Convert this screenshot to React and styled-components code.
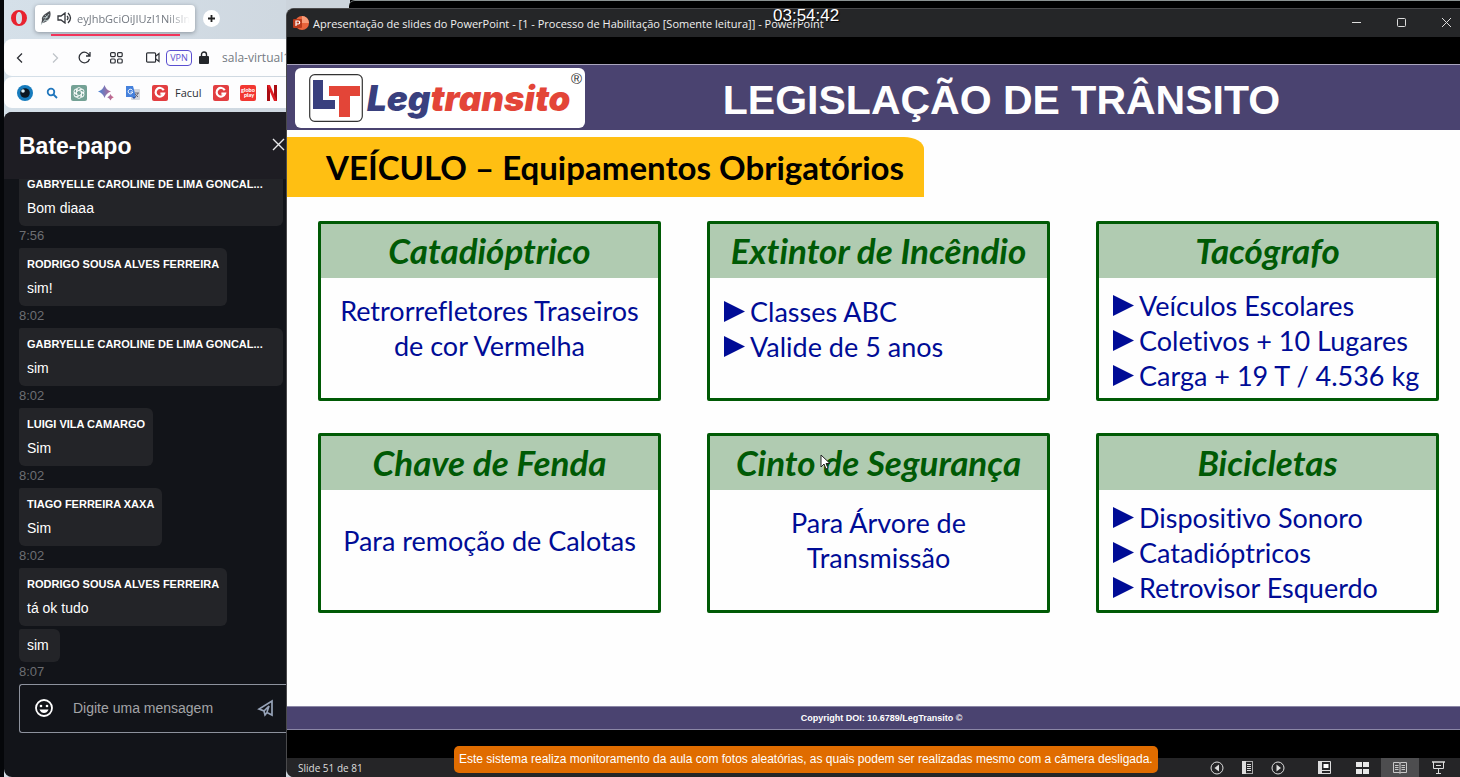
import React from 'react';
import styled, { createGlobalStyle } from 'styled-components';

const Global = createGlobalStyle`
  * { box-sizing: border-box; }
  body { margin: 0; background: #000; }
  button { border: 0; padding: 0; background: none; color: inherit; font: inherit; cursor: pointer; }
  h1, h2, h3, p, ul { margin: 0; padding: 0; }
`;
const Desktop = styled.div`
  position: relative;
  display: flex;
  height: 100vh;
  padding-left: 4px;
  overflow: hidden;
  background: #05070a;
`;
const Browser = styled.section`
  display: flex;
  flex-direction: column;
  flex: 0 0 282px;
  overflow: hidden;
  background: linear-gradient(100deg, #d5e0e9, #ccd4dc);
  font-family: "Open Sans", sans-serif;
`;
const TabStrip = styled.div`
  display: flex;
  align-items: center;
  height: 39px;
  flex: none;
  padding: 0 0 3px 7px;
  gap: 8px;
`;
const Tab = styled.button`
  position: relative;
  display: flex;
  align-items: center;
  gap: 5px;
  width: 160px;
  height: 27px;
  padding: 0 5px;
  border-radius: 4px;
  background: #fff;
  box-shadow: 0 1px 4px #8a939c;
  color: #747a82;
  &::after { content: ""; position: absolute; left: 16px; right: 15px; bottom: -4px; height: 2px; background: #f2345a; }
`;
const TabTitle = styled.span`
  flex: 1;
  overflow: hidden;
  white-space: nowrap;
  text-align: left;
  font-size: 11px;
  mask-image: linear-gradient(90deg, #000 80%, transparent);
`;
const NewTab = styled.button`
  display: grid;
  place-items: center;
  width: 17px;
  height: 17px;
  border-radius: 50%;
  background: #fff;
`;
const AddressBar = styled.div`
  display: flex;
  align-items: center;
  flex: none;
  height: 37px;
  padding-left: 12px;
  gap: 19px;
  border-radius: 8px 0 0 8px;
  background: #fdfdfe;
  color: #2d3036;
  button, svg { display: block; flex: none; }
`;
const History = styled.div`
  display: flex;
  gap: 29px;
`;
const SiteInfo = styled.div`
  display: flex;
  align-items: center;
  gap: 6px;
  margin-left: 4px;
`;
const Vpn = styled.button`
  width: 26px;
  height: 16px;
  border: 1px solid #5a4fd0;
  border-radius: 4px;
  color: #5a4fd0;
  font-size: 9px;
  line-height: 14px;
`;
const Address = styled.span`
  margin-left: 6px;
  color: #747a82;
  font-size: 12px;
  white-space: nowrap;
`;
const Bookmarks = styled.nav`
  display: flex;
  align-items: center;
  flex: none;
  height: 31px;
  margin: 1px 0 4px;
  padding-left: 13px;
  gap: 11px;
  border-radius: 8px 0 0 8px;
  background: #fdfdfe;
  a { display: flex; align-items: center; gap: 7px; color: #2d3036; font-size: 11px; text-decoration: none; }
  svg { display: block; }
`;
const Chat = styled.div`
  display: flex;
  flex: 1;
  flex-direction: column;
  min-height: 0;
  border-radius: 8px 0 0 8px;
  background: #121419;
  color: #fff;
  font-family: "Liberation Sans", sans-serif;
`;
const ChatHead = styled.header`
  display: flex;
  align-items: center;
  justify-content: space-between;
  flex: none;
  height: 67px;
  padding: 0 1px 0 15px;
  border-radius: 8px 0 0 0;
  background: #1e1d23;
  h2 { font-size: 23px; line-height: 28px; }
`;
const Messages = styled.div`
  display: flex;
  flex: 1;
  flex-direction: column;
  align-items: flex-start;
  justify-content: flex-end;
  min-height: 0;
  overflow: hidden;
  padding-left: 15px;
`;
const Bubble = styled.div`
  flex: none;
  width: ${p => (p.$wide ? '264px' : 'auto')};
  margin-bottom: ${p => (p.$joined ? 3 : 0)}px;
  padding: ${p => (p.$short ? '4px 11px 5px 8px' : '4px 8px 6px')};
  border-radius: 2px 6px 6px 6px;
  background: #232428;
  font-size: 14px;
  line-height: 24px;
  strong { display: block; white-space: nowrap; font-size: ${p => (p.$wide ? 11 : 11)}px; }
`;
const Time = styled.time`
  flex: none;
  height: 22px;
  color: #6c6e72;
  font-size: 13px;
  line-height: 20px;
`;
const Composer = styled.form`
  display: flex;
  align-items: center;
  flex: none;
  height: 49px;
  margin: 0 0 44px 15px;
  padding: 0 12px 2px 14px;
  border: 1px solid #8d929d;
  border-right: 0;
  border-radius: 3px 0 0 3px;
  gap: 19px;
  svg { display: block; }
  input { flex: 1; min-width: 0; border: 0; padding: 0; outline: 0; background: none; color: #fff; font: 14px "Liberation Sans", sans-serif; }
  input::placeholder { color: #a3a4a7; opacity: 1; }
`;
const Stage = styled.main`
  display: flex;
  flex: 1;
  flex-direction: column;
  min-width: 0;
  background: linear-gradient(90deg, #ccd4dc 64px, #000 64px);
`;
const BackWindow = styled.div`
  flex: none;
  height: 8px;
  margin-left: 63px;
  border-top: 1px solid #8b9292;
  border-radius: 6px 0 0 0;
  background: #000;
`;
const PowerPoint = styled.section`
  display: flex;
  flex: 1;
  flex-direction: column;
  min-height: 0;
  border: 1px solid #4a4a4c;
  border-width: 1px 0 0 1px;
  border-radius: 8px 0 0 8px;
  overflow: hidden;
  background: #000;
`;
const TitleBar = styled.header`
  display: flex;
  align-items: center;
  flex: none;
  height: 28px;
  padding: 0 8px 0 6px;
  gap: 4px;
  background: #252628;
  color: #f0f0f0;
  font: 11px "Open Sans", sans-serif;
  h1 { flex: 1; font: inherit; white-space: nowrap; }
`;
const WindowButtons = styled.div`
  display: flex;
  gap: 34px;
  svg { display: block; }
`;
const Slide = styled.article`
  display: flex;
  flex: 1;
  flex-direction: column;
  min-height: 0;
  margin: 27px 0 28px;
  background: #fefefe;
`;
const Banner = styled.header`
  display: flex;
  align-items: center;
  flex: none;
  height: 66px;
  padding: 0 8px;
  border-top: 1px solid #aaa5bd;
  background: #4a4370;
  h2 { flex: 1; padding: 4px 34px 0 0; text-align: center; color: #fefefe; font: bold 41px/48px "Liberation Sans", sans-serif; white-space: nowrap; }
`;
const Logo = styled.div`
  position: relative;
  display: flex;
  align-items: center;
  flex: none;
  width: 290px;
  height: 60px;
  padding-left: 14px;
  gap: 4px;
  border-radius: 6px;
  background: #fff;
`;
const Wordmark = styled.span`
  color: #39407e;
  font: italic 900 35px/40px Inter, sans-serif;
  em { color: #e34538; }
`;
const Registered = styled.span`
  position: absolute;
  top: 2px;
  right: 3px;
  color: #333;
  font: 15px/18px "Liberation Sans", sans-serif;
`;
const Ribbon = styled.h3`
  align-self: flex-start;
  flex: none;
  height: 60px;
  margin-top: 7px;
  padding: 0 20px 0 39px;
  border-radius: 0 20px 0 0 / 0 12px 0 0;
  background: #ffbf12;
  color: #000;
  font: bold 33px/60px Lato, sans-serif;
  font-variant-ligatures: none;
  white-space: nowrap;
`;
const Cards = styled.div`
  display: grid;
  grid-template-columns: repeat(3, 1fr);
  gap: 32px 46px;
  padding: 24px 21px 0 31px;
  font-variant-ligatures: none;
`;
const Card = styled.section`
  height: 180px;
  border: 3px solid #005a05;
  border-radius: 2px;
  background: #fefefe;
  color: #000c96;
  h4 { margin: 0; height: 54px; background: #b0cbb1; color: #005a05; text-align: center; font-family: Lato, sans-serif; font-size: 35px; font-style: italic; font-weight: bold; line-height: 52px; }
`;
const CardText = styled.p`
  padding-top: ${p => (p.$single ? 33 : 15)}px;
  text-align: center;
  white-space: pre-line;
  font-family: Lato, sans-serif;
  font-size: 27px;
  line-height: 35px;
`;
const CardList = styled.ul`
  && { padding: ${p => (p.$tall ? 10 : 16)}px 0 0 14px; }
  list-style: none;
  font-family: Lato, sans-serif;
  font-size: 27px;
  line-height: 35px;
  li { display: flex; align-items: center; gap: 5px; white-space: nowrap; }
`;
const Copyright = styled.footer`
  flex: none;
  height: 24px;
  margin-top: auto;
  padding-left: 16px;
  border: solid #8b87a6;
  border-width: 1px 0;
  background: #4a4370;
  color: #fff;
  text-align: center;
  font: bold 9px/22px "Liberation Sans", sans-serif;
`;
const StatusBar = styled.footer`
  display: flex;
  align-items: center;
  justify-content: space-between;
  flex: none;
  height: 19px;
  padding-left: 11px;
  background: #252527;
  color: #dedede;
  font: 10px "Open Sans", sans-serif;
`;
const ViewControls = styled.div`
  display: flex;
  gap: 12px;
  padding-right: 3px;
`;
const ControlGroup = styled.div`
  display: flex;
`;
const StatusButton = styled.button`
  display: grid;
  place-items: center;
  width: ${p => p.$w}px;
  height: 19px;
  background: ${p => (p.$active ? '#4d4d4f' : 'transparent')};
`;
const Clock = styled.time`
  position: absolute;
  top: 6px;
  left: 773px;
  color: #fff;
  font: 17px/20px "Liberation Sans", sans-serif;
  text-shadow: 1px 1px 1px #000;
`;
const Notice = styled.p`
  position: absolute;
  bottom: 4px;
  left: 454px;
  padding: 0 5px;
  border-radius: 5px;
  background: #e06c00;
  color: #fff;
  font: 12px/27px "Liberation Sans", sans-serif;
  white-space: nowrap;
`;
const Pointer = styled.svg`
  position: absolute;
  top: 454px;
  left: 820px;
`;

const G = () => (
  <svg width="16" height="16" viewBox="0 0 16 16"><rect width="16" height="16" rx="2" fill="#e23e41" /><path d="M11.700 5.200A4.300 4.300 0 1 0 12 8.600H8.400" fill="none" stroke="#fff" strokeWidth="2.200" /></svg>
);
const Icon = {
  opera: <svg width="16" height="16" viewBox="0 0 16 16"><path fillRule="evenodd" fill="#e8232f" d="M8 0a8 8 0 1 0 0 16A8 8 0 0 0 8 0Zm0 2c2 0 3 2.500 3 6s-1 6-3 6S5 11.500 5 8s1-6 3-6Z" /></svg>,
  feather: <svg width="12" height="16" viewBox="0 0 12 16"><path d="M1 15 2 10C1 6 6 3 10 1c2 5-1 11-8 12" fill="#4a4d52" /><path d="m1 15 8-11M3 8l5-1M4 11l5-1M5 5l2 2" stroke="#cdd" strokeWidth=".7" /></svg>,
  sound: <svg width="15" height="12" viewBox="0 0 15 12" fill="none" stroke="#34373c" strokeWidth="1.300"><path d="M1 4h3l4-3v10L4 8H1ZM10 4q2 2 0 4M11 1q5 5 0 10" /></svg>,
};
const Arrow = ({ dir }) => <svg width="7" height="12" viewBox="0 0 7 12"><path d={dir === 'l' ? 'M6 1.500 1.500 6 6 10.500' : 'm1 1.500 4.500 4.500L1 10.500'} fill="none" stroke={dir === 'l' ? '#2d3036' : '#bfc4c9'} strokeWidth="1.300" /></svg>;
const Bullet = () => <svg width="21" height="21" viewBox="0 0 21 21"><path d="M0 0 21 10.500 0 21Z" fill="#000c96" /></svg>;

const messages = [
  { from: 'GABRYELLE CAROLINE DE LIMA GONCAL...', wide: true, text: 'Bom diaaa', time: '7:56' },
  { from: 'RODRIGO SOUSA ALVES FERREIRA', text: 'sim!', time: '8:02' },
  { from: 'GABRYELLE CAROLINE DE LIMA GONCAL...', wide: true, text: 'sim', time: '8:02' },
  { from: 'LUIGI VILA CAMARGO', text: 'Sim', time: '8:02' },
  { from: 'TIAGO FERREIRA XAXA', text: 'Sim', time: '8:02' },
  { from: 'RODRIGO SOUSA ALVES FERREIRA', text: 'tá ok tudo' },
  { text: 'sim', time: '8:07' },
];
const cards = [
  { title: 'Catadióptrico', text: 'Retrorrefletores Traseiros\nde cor Vermelha' },
  { title: 'Extintor de Incêndio', list: ['Classes ABC', 'Valide de 5 anos'] },
  { title: 'Tacógrafo', list: ['Veículos Escolares', 'Coletivos + 10 Lugares', 'Carga + 19 T / 4.536 kg'] },
  { title: 'Chave de Fenda', text: 'Para remoção de Calotas', single: true },
  { title: 'Cinto de Segurança', text: 'Para Árvore de\nTransmissão' },
  { title: 'Bicicletas', list: ['Dispositivo Sonoro', 'Catadióptricos', 'Retrovisor Esquerdo'] },
];

const BrowserWindow = () => (
  <Browser>
    <TabStrip>
      {Icon.opera}
      <Tab>{Icon.feather}{Icon.sound}<TabTitle>eyJhbGciOiJIUzI1NiIsIn</TabTitle></Tab>
      <NewTab aria-label="Nova guia"><svg width="9" height="9" viewBox="0 0 9 9"><path d="M4.500 1v7M1 4.500h7" stroke="#222" strokeWidth="1.800" /></svg></NewTab>
    </TabStrip>
    <AddressBar>
      <History>
        <button aria-label="Voltar"><Arrow dir="l" /></button>
        <button aria-label="Avançar"><Arrow dir="r" /></button>
      </History>
      <button aria-label="Recarregar"><svg width="13" height="13" viewBox="0 0 13 13" fill="none" stroke="#2d3036" strokeWidth="1.300"><path d="M11.500 5A5.300 5.300 0 1 0 11.500 8M12 1v4H8" /></svg></button>
      <button aria-label="Painel"><svg width="13" height="12" viewBox="0 0 13 12" fill="none" stroke="#2d3036" strokeWidth="1.200"><rect x=".6" y=".6" width="4.600" height="4" rx="1" /><rect x="7.600" y=".6" width="4.600" height="4" rx="1" /><rect x=".6" y="7" width="4.600" height="4" rx="1" /><rect x="7.600" y="7" width="4.600" height="4" rx="1" /></svg></button>
      <SiteInfo>
        <svg width="14" height="11" viewBox="0 0 14 11" fill="none" stroke="#2d3036" strokeWidth="1.200"><rect x=".6" y=".8" width="9" height="9.400" rx="1" /><path d="m10 4 3-2.500v8L10 7" /></svg>
        <Vpn>VPN</Vpn>
        <svg width="12" height="13" viewBox="0 0 12 13"><rect x="1" y="5" width="10" height="8" rx="1" fill="#24262a" /><path d="M3.500 6V3.500a2.500 2.500 0 0 1 5 0V6" fill="none" stroke="#24262a" strokeWidth="1.400" /></svg>
        <Address>sala-virtual1</Address>
      </SiteInfo>
    </AddressBar>
    <Bookmarks>
      <a href="#olho" aria-label="Olho"><svg width="16" height="16" viewBox="0 0 16 16"><circle cx="8" cy="8" r="8" fill="#167bbd" /><circle cx="8" cy="8" r="4.800" fill="#0c1722" /><circle cx="6" cy="6" r="1.800" fill="#d8edf8" /></svg></a>
      <a href="#busca" aria-label="Busca"><svg width="16" height="16" viewBox="0 0 16 16" fill="none" stroke="#2177bd" strokeWidth="1.800"><circle cx="7" cy="7" r="3.300" /><path d="m9.500 9.500 3.500 3.500" /></svg></a>
      <a href="#gpt" aria-label="ChatGPT"><svg width="16" height="16" viewBox="0 0 16 16"><rect width="16" height="16" rx="2" fill="#74a195" /><g fill="none" stroke="#fff" strokeWidth=".9">{[0, 60, 120, 180, 240, 300].map(a => <path key={a} transform={`rotate(${a} 8 8)`} d="M5.500 8V4.500a2.600 2.600 0 0 1 5 0L8 6" />)}</g></svg></a>
      <a href="#gemini" aria-label="Gemini"><svg width="16" height="16" viewBox="0 0 16 16"><defs><linearGradient id="gem"><stop stopColor="#4383d8" /><stop offset="1" stopColor="#d46583" /></linearGradient></defs><path fill="url(#gem)" d="M6.500 0Q8 5 13 6.500 8 8 6.500 13 5 8 0 6.500 5 5 6.500 0ZM12.500 9q.8 2.500 3.300 3.300-2.500.8-3.300 3.300-.8-2.500-3.300-3.300 2.500-.8 3.300-3.300Z" /></svg></a>
      <a href="#tradutor" aria-label="Tradutor"><svg width="16" height="16" viewBox="0 0 16 16"><rect x="6" y="4" width="9" height="11" rx="1" fill="#d2d6dc" /><path d="M1 1h7l3 11H1Z" fill="#4581dc" /><path d="M7.500 5.500A2.300 2.300 0 1 0 7.700 7H5.500" stroke="#fff" fill="none" /><path d="m9 14 2-2H7Z" fill="#2a56b0" /><path d="M10 8h4m-1 0q-1 3-3 4m0-3 3 3" stroke="#667" fill="none" /></svg></a>
      <a href="#facul"><G />Facul</a>
      <a href="#g" aria-label="G"><G /></a>
      <a href="#globoplay" aria-label="Globoplay"><svg width="16" height="16" viewBox="0 0 16 16"><rect width="16" height="16" rx="2" fill="#f23731" /><g fill="#fff" fontFamily="Lato" fontWeight="900" fontSize="5.500" textAnchor="middle"><text x="8" y="7">globo</text><text x="9" y="12">play</text></g></svg></a>
      <a href="#netflix" aria-label="Netflix"><svg width="10" height="16" viewBox="0 0 10 16"><path d="M0 0h3v16H0ZM7 0h3v16H7Z" fill="#a90c12" /><path d="M0 0h3l7 16H7Z" fill="#e01b22" /></svg></a>
    </Bookmarks>
    <Chat>
      <ChatHead>
        <h2>Bate-papo</h2>
        <button aria-label="Fechar"><svg width="13" height="13" viewBox="0 0 13 13"><path d="m1 1 11 11M12 1 1 12" stroke="#e8e8ea" strokeWidth="1.400" /></svg></button>
      </ChatHead>
      <Messages>
        {messages.map((m, i) => (
          <React.Fragment key={i}>
            <Bubble $wide={m.wide} $joined={!m.time} $short={!m.from}>{m.from && <strong>{m.from}</strong>}{m.text}</Bubble>
            {m.time && <Time>{m.time}</Time>}
          </React.Fragment>
        ))}
      </Messages>
      <Composer onSubmit={e => e.preventDefault()}>
        <button type="button" aria-label="Emoji"><svg width="20" height="20" viewBox="0 0 20 20"><circle cx="10" cy="10" r="8" fill="none" stroke="#fff" strokeWidth="1.800" /><circle cx="7" cy="8" r="1.300" fill="#fff" /><circle cx="13" cy="8" r="1.300" fill="#fff" /><path d="M5.500 11.500h9q-1.500 3.500-4.500 3.500t-4.500-3.500Z" fill="#fff" /></svg></button>
        <input aria-label="Mensagem" placeholder="Digite uma mensagem" />
        <button aria-label="Enviar"><svg width="17" height="18" viewBox="0 0 17 18"><path d="M15 2v14l-5-2.500-2 2.500-1-4-5-2ZM7 12l5-5-2 6" fill="none" stroke="#97a3b8" strokeWidth="1.700" /></svg></button>
      </Composer>
    </Chat>
  </Browser>
);

const SlideView = () => (
  <Slide>
    <Banner>
      <Logo>
        <svg width="54" height="48" viewBox="0 0 54 48"><rect x=".7" y=".7" width="52.600" height="46.600" rx="5" fill="#fff" stroke="#333" strokeWidth="1.200" /><path d="M4 6h10v20h12v9H4Z" fill="#39407e" /><path d="M20 12h31v10H41v21H30V22H20Z" fill="#e34538" /></svg>
        <Wordmark>Leg<em>transito</em></Wordmark>
        <Registered>®</Registered>
      </Logo>
      <h2>LEGISLAÇÃO DE TRÂNSITO</h2>
    </Banner>
    <Ribbon>VEÍCULO – Equipamentos Obrigatórios</Ribbon>
    <Cards>
      {cards.map(c => (
        <Card key={c.title}>
          <h4>{c.title}</h4>
          {c.list
            ? <CardList $tall={c.list.length > 2}>{c.list.map(t => <li key={t}><Bullet />{t}</li>)}</CardList>
            : <CardText $single={c.single}>{c.text}</CardText>}
        </Card>
      ))}
    </Cards>
    <Copyright>Copyright DOI: 10.6789/LegTransito ©</Copyright>
  </Slide>
);

export default function App() {
  return (
    <Desktop>
      <Global />
      <BrowserWindow />
      <Stage>
        <BackWindow />
        <PowerPoint>
          <TitleBar>
            <svg width="16" height="14" viewBox="0 0 16 14"><circle cx="9" cy="7" r="7" fill="#e8643c" /><path d="M9 0a7 7 0 0 1 7 7H9Z" fill="#f79b78" /><rect y="3" width="9" height="9" rx="1" fill="#b93a1b" /><path d="M3 10V5h2.200a1.500 1.500 0 0 1 0 3H3" fill="none" stroke="#fff" strokeWidth="1.200" /></svg>
            <h1>Apresentação de slides do PowerPoint - [1 - Processo de Habilitação [Somente leitura]] - PowerPoint</h1>
            <WindowButtons>
              <button aria-label="Minimizar"><svg width="11" height="11" viewBox="0 0 11 11"><path d="M1 4.500h9" stroke="#ddd" /></svg></button>
              <button aria-label="Maximizar"><svg width="11" height="11" viewBox="0 0 11 11"><rect x="1.500" y=".5" width="8" height="8" rx="1" fill="none" stroke="#ddd" /></svg></button>
              <button aria-label="Fechar"><svg width="11" height="11" viewBox="0 0 11 11"><path d="m1 0 9 9M10 0l-9 9" stroke="#ddd" /></svg></button>
            </WindowButtons>
          </TitleBar>
          <SlideView />
          <StatusBar>
            <span>Slide 51 de 81</span>
            <ViewControls>
              <ControlGroup>
                <StatusButton $w={30} aria-label="Anterior"><svg width="14" height="14" viewBox="0 0 14 14"><circle cx="7" cy="7" r="6" fill="none" stroke="#ddd" /><path d="M9 3.500v7L4.500 7Z" fill="#ddd" /></svg></StatusButton>
                <StatusButton $w={31} aria-label="Menu"><svg width="11" height="13" viewBox="0 0 11 13"><rect x=".5" y=".5" width="10" height="12" fill="none" stroke="#aaa" /><path d="M0 0h4v13H0Z" fill="#ddd" /><path d="M5 3.500h4M5 5.500h4M5 7.500h4M5 9.500h4" stroke="#ddd" /></svg></StatusButton>
                <StatusButton $w={30} aria-label="Próximo"><svg width="14" height="14" viewBox="0 0 14 14"><circle cx="7" cy="7" r="6" fill="none" stroke="#ddd" /><path d="M5.500 3.500v7L10 7Z" fill="#ddd" /></svg></StatusButton>
              </ControlGroup>
              <ControlGroup>
                <StatusButton $w={38} aria-label="Normal"><svg width="13" height="13" viewBox="0 0 13 13"><path d="M.5.5h12v12H.5Z" fill="none" stroke="#ddd" /><path d="M0 0h4v13H0Z" fill="#ddd" /><path d="M5.500 3h5v4h-5Z" fill="#fff" /><path d="M4 9.500h9" stroke="#ddd" /></svg></StatusButton>
                <StatusButton $w={38} aria-label="Classificação"><svg width="13" height="12" viewBox="0 0 13 12"><path d="M0 0h6v5H0ZM7 0h6v5H7ZM0 7h6v5H0ZM7 7h6v5H7Z" fill="#e8e8e8" /></svg></StatusButton>
                <StatusButton $w={38} $active aria-label="Leitura"><svg width="14" height="12" viewBox="0 0 14 12" fill="none" stroke="#c8c8c8"><path d="M.5.5h6l.5 1 .5-1h6v10h-6l-.5 1-.5-1h-6ZM7 1v10M2 3.500h3.500M2 5.500h3.500M2 7.500h3.500M8.500 3.500H12M8.500 5.500H12M8.500 7.500H12" /></svg></StatusButton>
                <StatusButton $w={38} aria-label="Apresentação"><svg width="13" height="13" viewBox="0 0 13 13" fill="none" stroke="#ddd"><path d="M0 1h13" strokeWidth="1.500" /><path d="M1.500 1v6.500h10V1M4 4.500h5M6.500 8v4M4 12.500h5" /></svg></StatusButton>
              </ControlGroup>
            </ViewControls>
          </StatusBar>
        </PowerPoint>
      </Stage>
      <Clock>03:54:42</Clock>
      <Pointer width="11" height="16" viewBox="0 0 11 16"><path d="M1 1v12l3-3 2 5 2-1-2-4.500h4Z" fill="#fff" stroke="#222" /></Pointer>
      <Notice>Este sistema realiza monitoramento da aula com fotos aleatórias, as quais podem ser realizadas mesmo com a câmera desligada.</Notice>
    </Desktop>
  );
}
